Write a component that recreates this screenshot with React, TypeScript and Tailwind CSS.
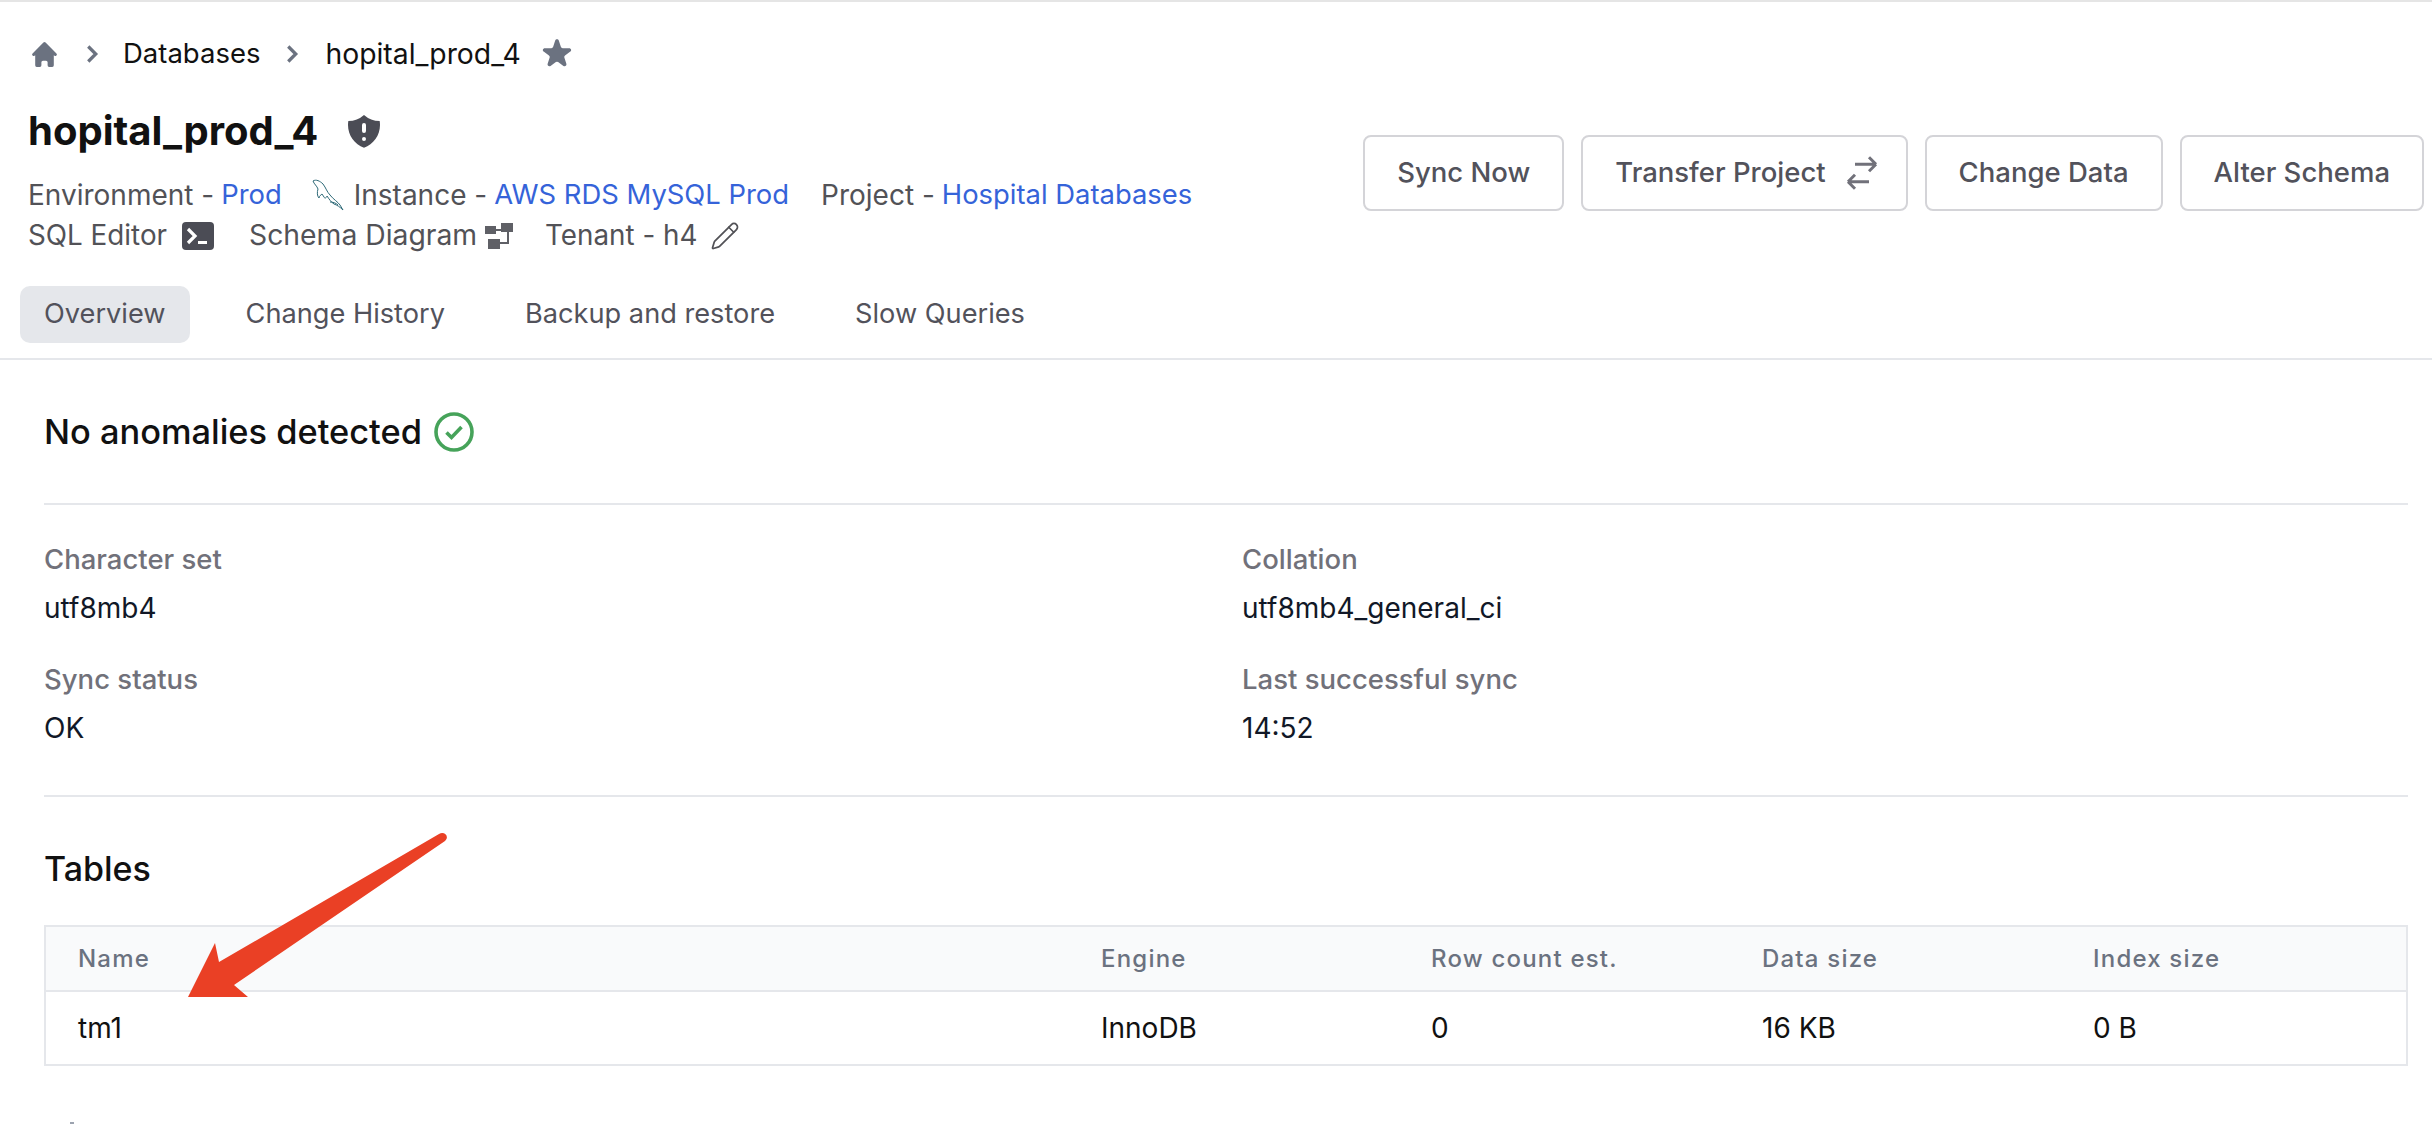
import { Pencil } from 'lucide-react'

const tabs = ['Overview', 'Change History', 'Backup and restore', 'Slow Queries']
const actions = ['Sync Now', 'Transfer Project', 'Change Data', 'Alter Schema']
const columns = ['Name', 'Engine', 'Row count est.', 'Data size', 'Index size']
const row = ['tm1', 'InnoDB', '0', '16 KB', '0 B']

function Field({ label, value }: { label: string; value: string }) {
  return (
    <div className="h-[120px]">
      <div className="text-[27.5px] leading-[36px] font-medium text-[#71717a]">{label}</div>
      <div className="mt-[13px] text-[28px] leading-[36px] text-[#111827]">{value}</div>
    </div>
  )
}

function HomeIcon() {
  return (
    <svg viewBox="0 0 20 20" className="h-[31px] w-[31px]" fill="#6b7280">
      <path d="M10.707 2.293a1 1 0 00-1.414 0l-7 7a1 1 0 001.414 1.414L4 10.414V17a1 1 0 001 1h2a1 1 0 001-1v-2a1 1 0 011-1h2a1 1 0 011 1v2a1 1 0 001 1h2a1 1 0 001-1v-6.586l.293.293a1 1 0 001.414-1.414l-7-7z" />
    </svg>
  )
}

function Chevron() {
  return (
    <svg viewBox="0 0 24 24" className="h-[30px] w-[30px]" fill="none" stroke="#6b7280" strokeWidth="2.6">
      <path d="M9 6l6 6-6 6" />
    </svg>
  )
}

function StarIcon() {
  return (
    <svg viewBox="0 0 20 20" className="h-[38px] w-[38px]" fill="#6b7280">
      <path d="M9.049 2.927c.3-.921 1.603-.921 1.902 0l1.07 3.292a1 1 0 00.95.69h3.462c.969 0 1.371 1.24.588 1.81l-2.8 2.034a1 1 0 00-.364 1.118l1.07 3.292c.3.921-.755 1.688-1.54 1.118l-2.8-2.034a1 1 0 00-1.175 0l-2.8 2.034c-.784.57-1.838-.197-1.539-1.118l1.07-3.292a1 1 0 00-.364-1.118L2.98 8.72c-.783-.57-.38-1.81.588-1.81h3.461a1 1 0 00.951-.69l1.07-3.292z" />
    </svg>
  )
}

function ShieldIcon() {
  return (
    <svg viewBox="0 0 20 20" className="h-[40px] w-[40px]" fill="#4b4c55">
      <path
        fillRule="evenodd"
        d="M10 1.944A11.954 11.954 0 012.166 5C2.056 5.649 2 6.319 2 7c0 5.225 3.34 9.67 8 11.317C14.66 16.67 18 12.225 18 7c0-.682-.057-1.35-.166-2.001A11.954 11.954 0 0110 1.944zM11 14a1 1 0 11-2 0 1 1 0 012 0zm0-7a1 1 0 10-2 0v3a1 1 0 102 0V7z"
      />
    </svg>
  )
}

function Dolphin() {
  return (
    <svg viewBox="0 0 32 32" className="h-[32px] w-[32px]" fill="none" stroke="#2f6a78" strokeWidth="1">
      <path d="M1 2c3-2 7 0 10 3 3 4 4 8 7 11 3 4 8 7 10 10l3 5c-3-3-6-5-9-6-3-2-5-5-7-8-1 2-2 3-3 1l-2-3c-1 1-3 2-3 4-2-2-2-6-1-9C5 7 2 5 1 2z" />
      <path d="M18 23c3 0 6 1 8 3" />
    </svg>
  )
}

function TerminalIcon() {
  return (
    <svg viewBox="0 0 32 28" className="h-[28px] w-[32px]">
      <rect x="0" y="0" width="32" height="28" rx="4" fill="#4b4c55" />
      <path d="M6 7l7 7-7 7" fill="none" stroke="#fff" strokeWidth="3.2" />
      <rect x="16" y="19" width="9" height="3" fill="#fff" />
    </svg>
  )
}

function DiagramIcon() {
  return (
    <svg viewBox="0 0 28 26" className="h-[26px] w-[28px]" fill="#5f6066">
      <rect x="0" y="3" width="11" height="8" />
      <rect x="16" y="0" width="12" height="9" />
      <rect x="3" y="16" width="12" height="10" />
      <path d="M11 6h5v2h-5zM22 9h2v12h-9v-2h7z" />
    </svg>
  )
}

function SwitchIcon() {
  return (
    <svg viewBox="0 0 24 24" className="ml-[15px] -mr-[9px] h-[42px] w-[42px]" fill="none" stroke="#71717a" strokeWidth="1.7">
      <path d="M8 7h12m0 0l-4-4m4 4l-4 4m0 6H4m0 0l4 4m-4-4l4-4" />
    </svg>
  )
}

function RedArrow() {
  return (
    <svg viewBox="0 0 280 180" className="absolute left-[180px] top-[823px] h-[180px] w-[280px]">
      <path d="M8 172 L35 118 L39 137 L259 9 C264 6 270 11 265 16 L54 160 L68 172 Z" fill="#ea4025" />
    </svg>
  )
}

export default function App() {
  return (
    <div
      className="relative h-[1124px] w-[2432px] overflow-hidden border-t-2 border-[#e5e5e5] bg-white text-[#111827]"
      style={{ fontFamily: 'Inter, "Liberation Sans", sans-serif' }}
    >
      <div className="flex h-[358px] flex-col border-b-2 border-[#e5e7eb]">
        <div className="mt-[27px] flex h-[50px] items-center pl-[29px] text-[27.5px] text-[#111]">
          <HomeIcon />
          <span className="ml-[17px]">
            <Chevron />
          </span>
          <span className="ml-[16px]">Databases</span>
          <span className="ml-[17px]">
            <Chevron />
          </span>
          <span className="ml-[18px] text-[28.3px]">hopital_prod_4</span>
          <span className="ml-[17px]">
            <StarIcon />
          </span>
        </div>

        <div className="mt-[25px] flex items-start justify-between pr-[8px] pl-[28px]">
          <div>
            <div className="flex h-[54px] items-center">
              <h1 className="text-[40px] leading-[54px] font-bold text-[#111]">hopital_prod_4</h1>
              <span className="ml-[26px]">
                <ShieldIcon />
              </span>
            </div>
            <div className="mt-[16px] flex h-[41px] items-center text-[28px] text-[#525257]">
              <span>Environment - </span>
              <span className="ml-[7px] text-[27.4px] text-[#3563d9]">Prod</span>
              <span className="mr-[10px] ml-[30px]">
                <Dolphin />
              </span>
              <span>Instance - </span>
              <span className="ml-[7px] text-[27.4px] text-[#3563d9]">AWS RDS MySQL Prod</span>
              <span className="ml-[32px]">Project - </span>
              <span className="ml-[7px] text-[27.4px] text-[#3563d9]">Hospital Databases</span>
            </div>
            <div className="flex h-[41px] items-center text-[27.8px] text-[#525257]">
              <span>SQL Editor</span>
              <span className="ml-[15px]">
                <TerminalIcon />
              </span>
              <span className="ml-[35px] text-[28.3px]">Schema Diagram</span>
              <span className="ml-[8px]">
                <DiagramIcon />
              </span>
              <span className="ml-[32px]">Tenant - h4</span>
              <Pencil className="ml-[13px] h-[30px] w-[30px]" strokeWidth={1.4} />
            </div>
          </div>
          <div className="mt-[31px] flex gap-[17px]">
            {actions.map((action) => (
              <button
                key={action}
                className="flex h-[76px] items-center rounded-[8px] border-2 border-[#d4d4d8] px-[32px] text-[27.5px] font-medium text-[#52525b]"
              >
                {action}
                {action === 'Transfer Project' && <SwitchIcon />}
              </button>
            ))}
          </div>
        </div>

        <div className="mt-[30px] flex gap-[8px] pl-[20px]">
          {tabs.map((tab, index) => (
            <div
              key={tab}
              className={`flex h-[57px] items-center rounded-[10px] px-[24px] text-[27.2px] text-[#52525b] ${
                index === 0 ? 'bg-[#e5e7eb]' : 'ml-[24px]'
              }`}
            >
              {tab}
            </div>
          ))}
        </div>
      </div>

      <main className="pr-[24px] pl-[44px]">
        <div className="flex h-[145px] items-center border-b-2 border-[#e5e7eb]">
          <h2 className="text-[34.4px] font-medium text-[#111]">No anomalies detected</h2>
          <svg viewBox="0 0 40 40" className="ml-[12px] h-[40px] w-[40px]" fill="none" stroke="#46a35a">
            <circle cx="20" cy="20" r="18" strokeWidth="3.6" />
            <path d="M12.5 20.5l5 5 10-10.5" strokeWidth="3.6" />
          </svg>
        </div>

        <div className="grid h-[292px] grid-cols-[1198px_1fr] content-start border-b-2 border-[#e5e7eb] pt-[36px]">
          <Field label="Character set" value="utf8mb4" />
          <Field label="Collation" value="utf8mb4_general_ci" />
          <Field label="Sync status" value="OK" />
          <Field label="Last successful sync" value="14:52" />
        </div>

        <h2 className="mt-[48px] text-[34px] leading-[48px] font-medium text-[#111]">Tables</h2>

        <div className="mt-[32px] h-[141px] border-2 border-[#e5e7eb]">
          <div className="grid h-[65px] grid-cols-[1023px_330px_331px_331px_1fr] items-center border-b-2 border-[#e5e7eb] bg-[#f9fafb] pl-[32px]">
            {columns.map((column) => (
              <div key={column} className="text-[24px] font-medium tracking-[1.2px] text-[#6b7280]">
                {column}
              </div>
            ))}
          </div>
          <div className="grid h-[72px] grid-cols-[1023px_330px_331px_331px_1fr] items-center pl-[32px]">
            {row.map((cell) => (
              <div key={cell} className="text-[28px] text-[#111]">
                {cell}
              </div>
            ))}
          </div>
        </div>
      </main>

      <RedArrow />
      {/* top of the next section, cut off by the window */}
      <div className="absolute bottom-0 left-[70px] h-[2px] w-[4px] bg-[#9ca3af]" />
    </div>
  )
}
